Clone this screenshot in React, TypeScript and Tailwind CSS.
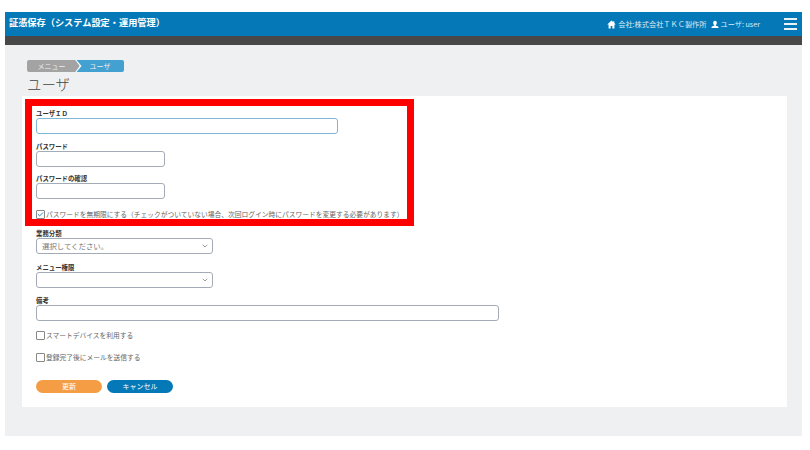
import { ChevronDown, Check } from 'lucide-react';

const font = { fontFamily: '"Noto Sans CJK JP", "Liberation Sans", sans-serif' };

function Label({ children, className = '' }: { children: string; className?: string }) {
  return <p className={`h-[9px] text-[6.4px] leading-[9px] font-bold text-[#333] ${className}`}>{children}</p>;
}

function Input({ className = '', focus = false }: { className?: string; focus?: boolean }) {
  return (
    <div
      className={`h-4 bg-white rounded-[3px] border-[1.5px] ${
        focus ? 'border-[#7fb6d8]' : 'border-[#a3acb6]'
      } ${className}`}
    />
  );
}

function Select({ value = '' }: { value?: string }) {
  return (
    <div className="w-[177px] h-4 bg-white rounded-[3px] border-[1.5px] border-[#a3acb6] flex items-center justify-between pl-[5px] pr-[3px]">
      <span className="text-[7.4px] text-[#777]">{value}</span>
      <ChevronDown size={8} className="text-[#666]" strokeWidth={2} />
    </div>
  );
}

function CheckRow({ label, checked = false, className = '' }: { label: string; checked?: boolean; className?: string }) {
  return (
    <div className={`flex items-center gap-px h-[10px] ${className}`}>
      <span className="w-[9px] h-[9px] bg-white border border-[#888] rounded-[1px] flex items-center justify-center shrink-0">
        {checked && <Check size={7} className="text-[#0a78b5]" strokeWidth={3} />}
      </span>
      <span className="text-[6.75px] leading-[10px] text-[#666] whitespace-nowrap">{label}</span>
    </div>
  );
}

export default function App() {
  return (
    <div className="w-[810px] h-[450px] bg-white pt-3 pl-[5px] pr-2 pb-[14px] overflow-hidden" style={font}>
      <div className="h-full flex flex-col bg-[#eff0f2]">
        <header className="h-6 bg-[#0579b8] flex items-center justify-between pl-1 pr-[5px] text-white shrink-0">
          <h1 className="text-[9.2px] font-bold leading-none -mt-[3px]">証憑保存（システム設定・運用管理）</h1>
          <div className="flex items-center">
            <svg width="9" height="9" viewBox="0 0 16 16" className="fill-white mr-[2px]">
              <path d="M8 1 0.5 8h2.3v7h3.700v-4.500h3V15h3.700V8h2.300L13 5.200V2h-2v1.400z" />
            </svg>
            <span className="text-[7.2px] text-[#dcebf5] mr-[5px]">会社:株式会社ＴＫＣ製作所</span>
            <svg width="8" height="9" viewBox="0 0 16 16" className="fill-white mr-[1px]">
              <path d="M8 0.500c2.400 0 3.600 1.800 3.600 4s-1 4-1.900 4.600v1.300c2.600.6 5.300 1.600 5.300 3.100v1.500H1v-1.500c0-1.500 2.700-2.500 5.300-3.100V9.100C5.400 8.500 4.400 6.700 4.400 4.500s1.200-4 3.600-4z" />
            </svg>
            <span className="text-[7.2px] text-[#dcebf5] mr-[24px]">ユーザ: user</span>
            <div className="flex flex-col gap-[3px] w-[13px] -mt-[1px]">
              <span className="h-[2px] bg-[#e8f2f8]" />
              <span className="h-[2px] bg-[#e8f2f8]" />
              <span className="h-[2px] bg-[#e8f2f8]" />
            </div>
          </div>
        </header>
        <div className="h-[9px] bg-[#484848] shrink-0" />

        <main className="flex-1 px-[17px] pt-[15px]">
          <nav className="ml-[5px] flex h-3 w-[97px] text-[7px] leading-3 text-[#eee] relative">
            <span className="w-[49px] bg-[#a3a3a3] rounded-l-[2px] text-center">メニュー</span>
            <span className="flex-1 bg-[#43a1d2] rounded-r-[2px] text-center">ユーザ</span>
            <svg width="7" height="12" viewBox="0 0 7 12" className="absolute left-[48px] top-0">
              <path d="M0 0h1.500L6.500 6 1.500 12H0L4.500 6z" fill="#fff" />
              <path d="M0 0 4.500 6 0 12z" fill="#a3a3a3" />
            </svg>
          </nav>
          <h2 className="ml-[5px] mt-[2px] text-[14.4px] leading-[20px] font-light text-[#444]">ユーザ</h2>

          <section className="relative bg-white w-[765px] h-[311px] pl-[14px] pt-[13px] mt-[2px]">
            <Label>ユーザＩＤ</Label>
            <Input className="w-[302px]" focus />
            <Label className="mt-[8px]">パスワード</Label>
            <Input className="w-[129px]" />
            <Label className="mt-[7px]">パスワードの確認</Label>
            <Input className="w-[129px]" />
            <CheckRow className="mt-[10px]" checked label="パスワードを無期限にする（チェックがついていない場合、次回ログイン時にパスワードを変更する必要があります）" />

            <Label className="mt-[10px]">業務分類</Label>
            <Select value="選択してください。" />
            <Label className="mt-[9px]">メニュー権限</Label>
            <Select />
            <Label className="mt-[8px]">備考</Label>
            <Input className="w-[463px]" />
            <CheckRow className="mt-[9px]" label="スマートデバイスを利用する" />
            <CheckRow className="mt-[12px]" label="登録完了後にメールを送信する" />

            <div className="flex gap-[5px] mt-[18px]">
              <button className="w-[66px] h-[13px] rounded-full bg-[#f59d44] text-white text-[7px] leading-none">更新</button>
              <button className="w-[66px] h-[13px] rounded-full bg-[#0579b8] text-white text-[7px] leading-none">キャンセル</button>
            </div>

            <div className="absolute left-[3px] top-[3px] w-[389px] h-[127px] border-[7px] border-[#ff0000]" />
          </section>
        </main>
      </div>
    </div>
  );
}
